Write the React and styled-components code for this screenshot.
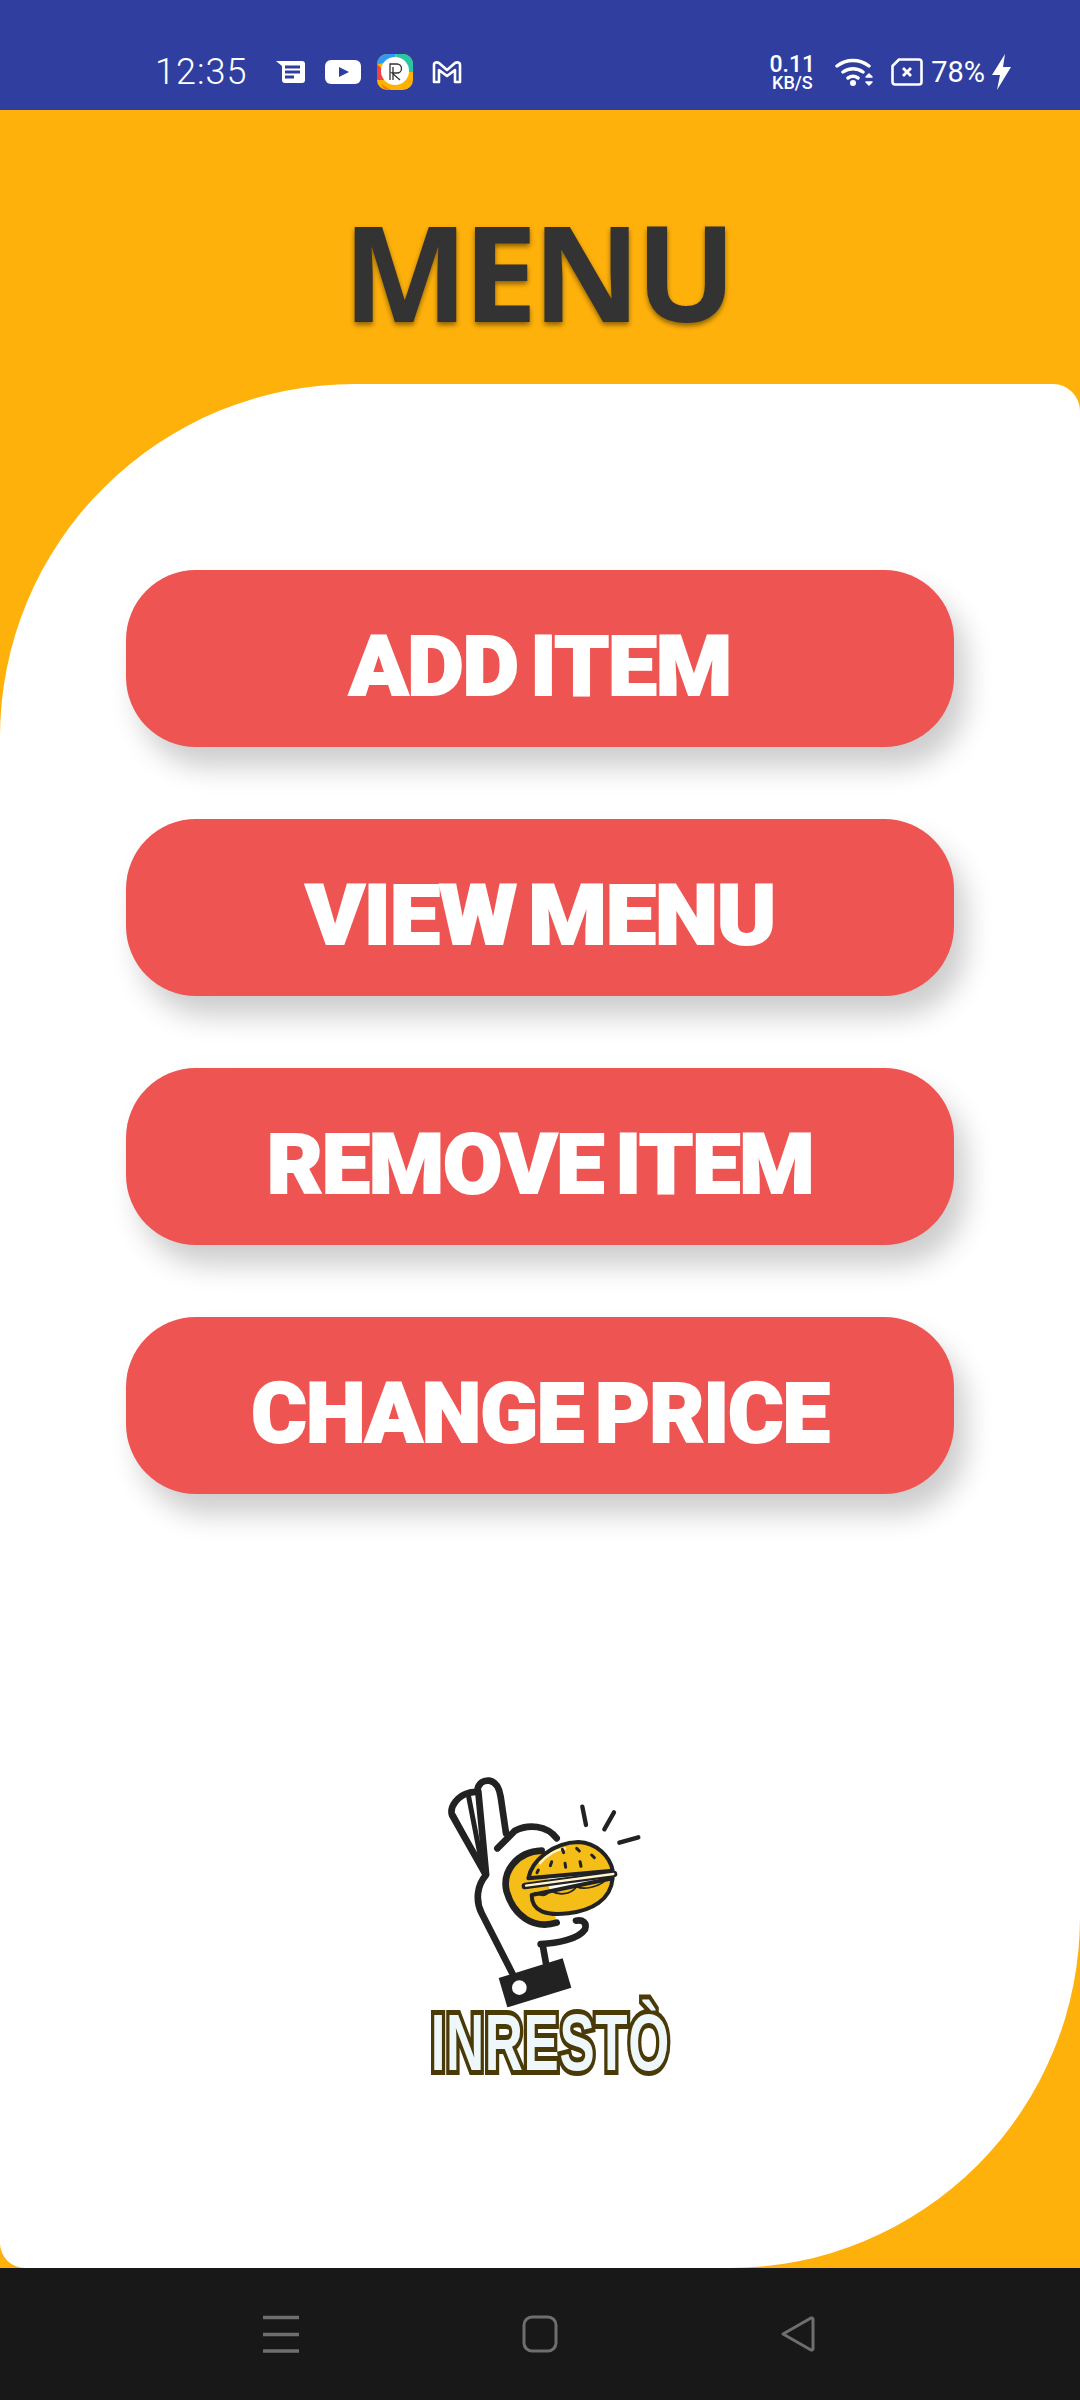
import React from 'react';
import styled, { createGlobalStyle } from 'styled-components';

const Global = createGlobalStyle`
  html, body { margin: 0; padding: 0; background: #181818; }
  * { box-sizing: border-box; }
`;

const Screen = styled.div`
  width: 1080px;
  height: 2400px;
  display: flex;
  flex-direction: column;
  overflow: hidden;
  background: #ffb10b;
`;

const StatusBar = styled.div`
  height: 110px;
  flex: none;
  background: #303f9f;
  display: flex;
  align-items: center;
  justify-content: space-between;
  padding: 34px 68px 0 155px;
  color: #fff;
  font-family: Roboto, sans-serif;
`;

const StatusGroup = styled.div`
  display: flex;
  align-items: center;
`;

const Clock = styled.span`
  font-size: 36px;
  font-weight: 300;
  letter-spacing: 1px;
  margin-right: 29px;
`;

const NotifIcon = styled.svg`
  display: block;
  margin-right: ${p => p.$gap || 0}px;
`;

const Speed = styled.div`
  display: flex;
  flex-direction: column;
  align-items: center;
  font-weight: 500;
  margin-right: 20px;
`;

const SpeedValue = styled.span`
  font-size: 23px;
  line-height: 20px;
`;

const SpeedUnit = styled.span`
  font-size: 18px;
  line-height: 15px;
`;

const Battery = styled.span`
  font-size: 29px;
  margin: 0 7px 0 8px;
`;

const Title = styled.h1`
  margin: 0;
  height: 274px;
  flex: none;
  padding: 70px 6px 0 0;
  text-align: center;
  font-family: "Open Sans", sans-serif;
  font-size: 133px;
  line-height: 182px;
  font-weight: 700;
  letter-spacing: -5px;
  color: #333;
  text-shadow: 0 3px 5px rgba(0, 0, 0, 0.45);
`;

const Panel = styled.div`
  flex: 1;
  background: #fff;
  border-radius: 355px 27px 350px 25px / 353px 27px 351px 25px;
  padding: 186px 126px 0;
  display: flex;
  flex-direction: column;
`;

const MenuList = styled.div`
  display: flex;
  flex-direction: column;
  gap: 72px;
`;

const MenuButton = styled.button`
  height: 177px;
  border: 0;
  padding: 0;
  border-radius: 70px;
  background: #ee5451;
  box-shadow: 12px 20px 28px rgba(0, 0, 0, 0.2);
  display: flex;
  align-items: center;
  justify-content: center;
  color: #fff;
  font-family: Roboto, sans-serif;
  font-weight: 900;
  font-size: 83px;
`;

const ButtonLabel = styled.span`
  display: block;
  transform: translateY(8px) scaleX(${p => p.$squeeze});
  letter-spacing: -1px;
  word-spacing: -8px;
  -webkit-text-stroke: 2px #fff;
`;

const Logo = styled.div`
  margin-top: 256px;
  align-self: center;
  display: flex;
  flex-direction: column;
  align-items: center;
  transform: translateX(10px);
`;

const LogoMark = styled.svg`
  display: block;
`;

const LogoName = styled.div`
  margin-top: -14px;
  font-family: "Liberation Sans", sans-serif;
  font-weight: 700;
  font-size: 80px;
  line-height: 84px;
  color: #eef7fa;
  -webkit-text-stroke: 10px #4a3a08;
  paint-order: stroke fill;
  letter-spacing: 1px;
  transform: scaleX(0.66);
`;

const NavBar = styled.div`
  height: 132px;
  flex: none;
  background: #181818;
  display: flex;
  align-items: flex-start;
  justify-content: space-between;
  padding: 47px 262px 0 263px;
`;

const items = [
  { label: 'ADD ITEM', squeeze: 1.05 },
  { label: 'VIEW MENU', squeeze: 1.08 },
  { label: 'REMOVE ITEM', squeeze: 1.035 },
  { label: 'CHANGE PRICE', squeeze: 1.02 },
];

const Burger = () => (
  <LogoMark width="300" height="265" viewBox="0 0 900 795">
    <g fill="none" stroke="#222" strokeLinecap="round" strokeLinejoin="round">
      <path d="M338 672 L245 490 C225 450 232 405 258 375 L156 195 C148 170 175 135 208 128 L232 125 C232 100 250 90 268 92 C290 95 298 115 302 140 L318 250" strokeWidth="20" />
      <path d="M205 135 L250 365 M160 195 L240 345" strokeWidth="15" />
      <path d="M235 125 L258 370" strokeWidth="20" />
      <path d="M292 295 L345 242 C385 222 440 225 470 265" strokeWidth="20" />
      <path d="M428 585 L438 640" strokeWidth="20" />
      <path d="M422 582 C470 580 535 568 555 538 C562 518 548 508 528 512" strokeWidth="20" />
      <path d="M470 518 C400 540 340 495 320 425 C305 365 350 305 425 302" strokeWidth="20" fill="#f5bd17" />
      <path d="M385 385 C395 330 460 278 535 276 C590 278 630 320 638 362 Z" strokeWidth="12" fill="#f5bd17" />
      <path d="M395 435 C395 485 440 498 505 490 C575 482 632 450 638 385 Z" strokeWidth="12" fill="#f5bd17" />
      <path d="M375 408 L642 372" strokeWidth="20" />
      <path d="M378 407 L640 372" strokeWidth="7" stroke="#fff6d0" />
      <path d="M405 428 C425 442 440 436 452 422 C475 436 510 436 530 410 C550 420 590 412 612 395" strokeWidth="5" />
      <path d="M420 340 C440 315 465 300 495 295" strokeWidth="7" stroke="#fff6d0" />
      <path d="M455 335 l-4 12 M487 298 l4 10 M530 295 l8 8 M575 315 l8 8 M495 340 l2 12 M540 335 l3 14 M415 360 l-4 8" strokeWidth="9" />
      <path d="M547 170 L558 225 M642 187 L613 238 M715 262 L658 278" strokeWidth="13" />
    </g>
    <path d="M296 684 L488 625 L514 713 L322 772 Z" fill="#222" />
    <circle cx="358" cy="713" r="22" fill="#fff" />
  </LogoMark>
);

const App = () => (
  <Screen>
    <Global />
    <StatusBar>
      <StatusGroup>
        <Clock>12:35</Clock>
        <NotifIcon $gap={19} width="30" height="24" viewBox="0 0 30 24">
          <path d="M0 1h26a3 3 0 0 1 3 3v16a3 3 0 0 1-3 3H9a3 3 0 0 1-3-3V6z" fill="#fff" />
          <path d="M9 7h15M9 12h15M9 17h9" stroke="#303f9f" strokeWidth="3" />
        </NotifIcon>
        <NotifIcon $gap={16} width="36" height="24" viewBox="0 0 36 24">
          <rect width="36" height="24" rx="6" fill="#fff" />
          <path d="M14 7l10 5-10 5z" fill="#303f9f" />
        </NotifIcon>
        <NotifIcon $gap={19} width="36" height="36" viewBox="0 0 36 36">
          <rect width="36" height="36" rx="10" fill="#ffb300" />
          <path d="M0 10a10 10 0 0 1 10-10h8v8z" fill="#2f9cf4" />
          <path d="M18 0h8a10 10 0 0 1 10 10v8h-8z" fill="#26c6a6" />
          <path d="M0 10l8 8 0 8H0z" fill="#ef4444" />
          <path d="M4 30l10 6h-4a10 10 0 0 1-6-6z" fill="#f57c00" />
          <circle cx="18" cy="17" r="14" fill="#fff" />
          <path d="M13 26V10h7a4 4 0 0 1 0 9h-5l8 7M16 26V13" fill="none" stroke="#333" strokeWidth="1.3" />
        </NotifIcon>
        <NotifIcon width="30" height="24" viewBox="0 0 30 24">
          <path d="M2 22V5c0-3 3-3 5-2l8 7 8-7c2-1 5-1 5 2v17h-5V10l-8 6-8-6v12z" fill="none" stroke="#fff" strokeWidth="2.6" strokeLinejoin="round" />
        </NotifIcon>
      </StatusGroup>
      <StatusGroup>
        <Speed>
          <SpeedValue>0.11</SpeedValue>
          <SpeedUnit>KB/S</SpeedUnit>
        </Speed>
        <NotifIcon $gap={16} width="40" height="30" viewBox="0 0 40 30">
          <path d="M2 9a26 26 0 0 1 32 0M8 15a17 17 0 0 1 20 0M13 21a9 9 0 0 1 10 0" fill="none" stroke="#fff" strokeWidth="3.4" strokeLinecap="round" />
          <circle cx="18" cy="26" r="3" fill="#fff" />
          <path d="M31 20l3-3 3 3zM31 25l3 3 3-3z" fill="#fff" stroke="#fff" strokeWidth="1.5" strokeLinejoin="round" />
        </NotifIcon>
        <NotifIcon width="32" height="28" viewBox="0 0 32 28">
          <path d="M8 1.500h20a2.500 2.500 0 0 1 2.500 2.500v20a2.500 2.500 0 0 1-2.500 2.500H4a2.500 2.500 0 0 1-2.500-2.500V8z" fill="none" stroke="#fff" strokeWidth="2.6" strokeLinejoin="round" />
          <path d="M12 10l8 8M20 10l-8 8" stroke="#fff" strokeWidth="2.8" />
        </NotifIcon>
        <Battery>78%</Battery>
        <NotifIcon width="20" height="36" viewBox="0 0 20 36">
          <path d="M13 0L0 21h8l-3 15L19 13h-8z" fill="#fff" />
        </NotifIcon>
      </StatusGroup>
    </StatusBar>
    <Title>MENU</Title>
    <Panel>
      <MenuList>
        {items.map(item => (
          <MenuButton key={item.label}>
            <ButtonLabel $squeeze={item.squeeze}>{item.label}</ButtonLabel>
          </MenuButton>
        ))}
      </MenuList>
      <Logo>
        <Burger />
        <LogoName>INRESTÒ</LogoName>
      </Logo>
    </Panel>
    <NavBar>
      <svg width="38" height="38" viewBox="0 0 38 38">
        <path d="M0 2.500h36M0 19.500h36M0 36h36" stroke="#6e6e6e" strokeWidth="3.500" />
      </svg>
      <svg width="38" height="38" viewBox="0 0 38 38">
        <rect x="2" y="2" width="32" height="34" rx="8" fill="none" stroke="#6e6e6e" strokeWidth="3" />
      </svg>
      <svg width="38" height="38" viewBox="0 0 38 38">
        <path d="M33 4a1.500 1.500 0 0 0-2-1L3 19l28 16a1.500 1.500 0 0 0 2-1z" fill="none" stroke="#6e6e6e" strokeWidth="3" strokeLinejoin="round" />
      </svg>
    </NavBar>
  </Screen>
);

export default App;
